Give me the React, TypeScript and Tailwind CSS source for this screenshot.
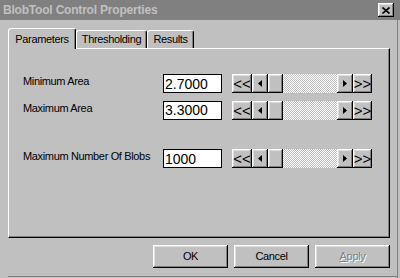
import React from 'react';

// --- 3D EDGES ---

const raised = 'shadow-[inset_-1px_-1px_#000,inset_1px_1px_#fff,inset_-2px_-2px_#808080,inset_2px_2px_#dfdfdf]';

// --- SMALL PARTS ---

const CloseButton = () => (
    <div className={`w-[16px] h-[14px] bg-[#c0c0c0] flex items-center justify-center ${raised}`}>
        <svg width="8" height="7" viewBox="0 0 8 7">
            <path d="M0.5 0.5 L7.5 6.5 M7.5 0.5 L0.5 6.5" stroke="#000" strokeWidth="1.7" fill="none" />
        </svg>
    </div>
);

const Tab = ({ label, active, width }: { label: string; active?: boolean; width: string }) => (
    <div
        className={`${width} ${active ? 'h-[21px] -mb-px z-10' : 'h-[18px]'} relative bg-[#c0c0c0] flex items-center justify-center border-l border-t border-r border-l-white border-t-white border-r-black rounded-t-[3px] shadow-[inset_-1px_0_#808080] text-[11px] tracking-[-0.35px] text-black`}
    >
        {label}
    </div>
);

const Arrow = ({ dir }: { dir: 'left' | 'right' }) => (
    <svg width="4" height="7" viewBox="0 0 4 7">
        <polygon points={dir === 'left' ? '4,0 4,7 0,3.5' : '0,0 0,7 4,3.5'} fill="#000" />
    </svg>
);

const ScrollControl = () => (
    <div className="flex h-[19px] w-[140px]">
        <div className={`w-[20px] h-full flex items-center justify-center text-[15px] leading-none ${raised}`}>&lt;&lt;</div>
        <div className={`w-[16px] h-full flex items-center justify-center ${raised}`}><Arrow dir="left" /></div>
        <div className={`w-[15px] h-full ${raised}`} />
        <div className="flex-1 h-full bg-[image:repeating-conic-gradient(#c0c0c0_0%_25%,#ffffff_0%_50%)] bg-[size:2px_2px]" />
        <div className={`w-[16px] h-full flex items-center justify-center ${raised}`}><Arrow dir="right" /></div>
        <div className={`w-[19px] h-full flex items-center justify-center text-[15px] leading-none ${raised}`}>&gt;&gt;</div>
    </div>
);

const FieldRow = ({ label, value, className = '' }: { label: string; value: string; className?: string }) => (
    <div className={`flex items-center ${className}`}>
        <span className="w-[140px] mb-[5px] text-[11px] tracking-[-0.35px] text-black">{label}</span>
        <div className="w-[59px] h-[19px] bg-white border border-black flex items-center pl-[1px] text-[14px] leading-none text-black">
            {value}
        </div>
        <div className="ml-[10px]">
            <ScrollControl />
        </div>
    </div>
);

const DialogButton = ({ label, disabled }: { label: React.ReactNode; disabled?: boolean }) => (
    <div
        className={`w-[75px] h-[23px] flex items-center justify-center text-[11px] tracking-[-0.35px] ${raised} ${disabled ? 'text-[#808080] [text-shadow:1px_1px_0_#fff]' : 'text-black'}`}
    >
        {label}
    </div>
);

// --- MAIN COMPONENT ---

export default function App() {
    return (
        <div className="w-[400px] h-[278px] bg-[#c0c0c0] flex flex-col overflow-hidden font-['Liberation_Sans',Arial,sans-serif]">
            {/* Title bar */}
            <div className="h-[20px] bg-[#808080] flex items-center justify-between pl-[3px] pr-[6px]">
                <span className="text-[#c0c0c0] font-bold text-[12px] tracking-[-0.2px]">BlobTool Control Properties</span>
                <CloseButton />
            </div>

            {/* Body */}
            <div className="flex-1 flex flex-col w-[398px] border-r border-[#808080] pl-[8px]">
                {/* Tabs */}
                <div className="flex items-end h-[20px] mt-[8px]">
                    <Tab label="Parameters" active width="w-[68px]" />
                    <Tab label="Thresholding" width="w-[71px]" />
                    <Tab label="Results" width="w-[47px]" />
                </div>

                {/* Panel */}
                <div className="w-[382px] h-[190px] border-l border-t border-r border-b border-l-white border-t-white border-r-black border-b-black shadow-[inset_-1px_-1px_#808080] pl-[14px] pt-[24px]">
                    <FieldRow label="Minimum Area" value="2.7000" />
                    <FieldRow label="Maximum Area" value="3.3000" className="mt-[5px]" />
                    <FieldRow label="Maximum Number Of Blobs" value="1000" className="mt-[27px]" />
                </div>

                {/* Buttons */}
                <div className="flex justify-end gap-[6px] w-[382px] mt-[7px]">
                    <DialogButton label="OK" />
                    <DialogButton label="Cancel" />
                    <DialogButton label={<><span className="underline">A</span>pply</>} disabled />
                </div>

                <div className="mt-auto mb-[1px] h-px bg-[#808080]" />
            </div>
        </div>
    );
}
